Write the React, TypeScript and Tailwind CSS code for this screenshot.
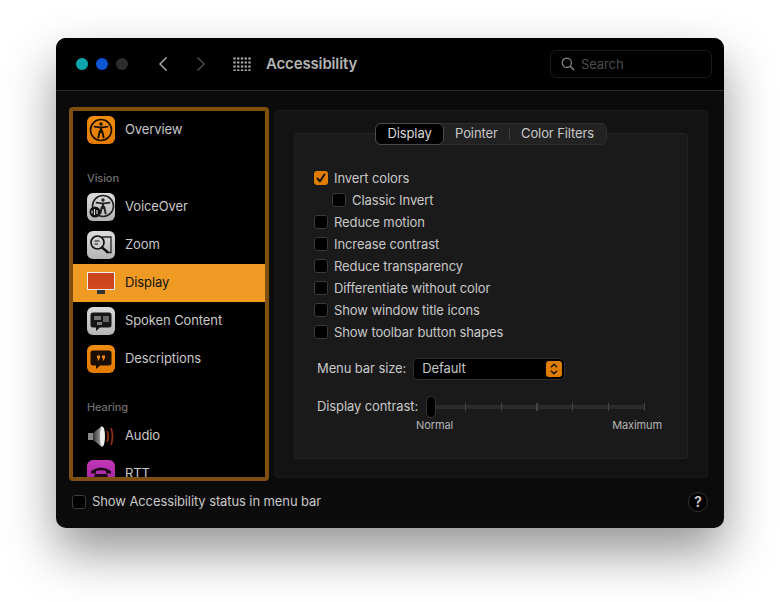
const options = [
  { label: "Invert colors", checked: true },
  { label: "Classic Invert", nested: true },
  { label: "Reduce motion" },
  { label: "Increase contrast" },
  { label: "Reduce transparency" },
  { label: "Differentiate without color" },
  { label: "Show window title icons" },
  { label: "Show toolbar button shapes" },
];

function Figure({ color, x = 14, y = 14, r = 10.5 }: { color: string; x?: number; y?: number; r?: number }) {
  return (
    <g fill="none" stroke={color}>
      <circle cx={x} cy={y} r={r} strokeWidth="1.6" />
      <circle cx={x} cy={y - 6} r="1.7" fill={color} stroke="none" />
      <path d={`M${x - 6.5} ${y - 3.4}L${x} ${y - 2.4}L${x + 6.5} ${y - 3.4}`} strokeWidth="1.7" strokeLinecap="round" />
      <path d={`M${x} ${y - 2.4}V${y + 2}M${x - 1.2} ${y + 1}L${x - 2.6} ${y + 7.4}M${x + 1.2} ${y + 1}L${x + 2.6} ${y + 7.4}`} strokeWidth="2" strokeLinecap="round" />
    </g>
  );
}

function IconTile({ children, tile }: { children: React.ReactNode; tile: "orange" | "gray" | "purple" }) {
  const bg = {
    orange: "bg-gradient-to-b from-[#f08c10] to-[#e47c02]",
    gray: "bg-gradient-to-b from-[#dcdcdc] to-[#b4b4b4]",
    purple: "bg-gradient-to-b from-[#c238b8] to-[#9c1f98]",
  }[tile];
  return (
    <div className={`w-7 h-7 rounded-[6px] overflow-hidden shrink-0 ${bg}`}>
      <svg width="28" height="28" viewBox="0 0 28 28">
        {children}
      </svg>
    </div>
  );
}

function Bubble({ children, color = "#111" }: { children?: React.ReactNode; color?: string }) {
  return (
    <>
      <path d="M6 5.500h16a2.500 2.500 0 0 1 2.500 2.500v10a2.500 2.500 0 0 1-2.500 2.500h-9l-4 3.500v-3.500H6A2.500 2.500 0 0 1 3.500 18V8A2.500 2.500 0 0 1 6 5.500z" fill={color} />
      {children}
    </>
  );
}

const rows = [
  {
    name: "VoiceOver",
    icon: (
      <IconTile tile="gray">
        <Figure color="#222" x={16} y={13} r={10.500} />
        <circle cx="8" cy="19" r="5.500" fill="#111" />
        <path d="M5 17.500v3M7.500 16v6M10 17v4" stroke="#ddd" strokeWidth="1.100" />
      </IconTile>
    ),
  },
  {
    name: "Zoom",
    icon: (
      <IconTile tile="gray">
        <path d="M15 6h9v15.500h-5" fill="none" stroke="#222" strokeWidth="1.300" />
        <circle cx="10.500" cy="11.500" r="6.500" fill="#ccc" stroke="#111" strokeWidth="1.700" />
        <path d="M7.500 10h5M7.500 13h3.500" stroke="#111" strokeWidth="1.200" />
        <path d="M15 16.500l5.500 4.500" stroke="#111" strokeWidth="2.400" strokeLinecap="round" />
      </IconTile>
    ),
  },
  {
    name: "Display",
    icon: (
      <div className="w-7 h-7 pt-[3px] shrink-0 flex flex-col items-center">
        <div className="w-7 h-[18px] border border-[#eee] bg-gradient-to-b from-[#c9431d] to-[#d2481f]" />
        <div className="w-2 h-1 bg-[#333]" />
      </div>
    ),
  },
  {
    name: "Spoken Content",
    icon: (
      <IconTile tile="gray">
        <Bubble color="#161616">
          <rect x="7" y="9" width="7" height="4" fill="#777" />
          <rect x="16" y="9" width="6" height="6" fill="#666" />
          <rect x="10" y="15" width="5" height="3" fill="#777" />
        </Bubble>
      </IconTile>
    ),
  },
  {
    name: "Descriptions",
    icon: (
      <IconTile tile="orange">
        <Bubble color="#1a0f02">
          <path d="M10 10.500h3v2.500l-1.500 2.500h-1l.7-2.200H10zM15 10.500h3v2.500l-1.500 2.500h-1l.7-2.200H15z" fill="#f08c10" />
        </Bubble>
      </IconTile>
    ),
  },
];

function Row({ name, icon, selected }: { name: string; icon: React.ReactNode; selected?: boolean }) {
  return (
    <div className={`h-[38px] pl-[14px] flex items-center gap-[10px] ${selected ? "bg-[#ef9a23] text-[#111]" : "text-[#c8c8c8]"}`}>
      {icon}
      <span className="text-[13px]">{name}</span>
    </div>
  );
}

function Heading({ children }: { children: string }) {
  return <div className="h-[39px] pl-[14px] pb-[3px] flex items-end text-[11px] font-medium leading-[14px] text-[#6e6e6e]">{children}</div>;
}

function Checkbox({ checked }: { checked?: boolean }) {
  return (
    <div className={`w-[14px] h-[14px] mb-[2px] rounded-[3px] shrink-0 flex items-center justify-center ${checked ? "bg-[#e07c00]" : "bg-black border border-[#3a3a3a]"}`}>
      {checked && (
        <svg width="12" height="12" viewBox="0 0 12 12">
          <path d="M2.500 6.500L5 9.300L9.500 2.500" fill="none" stroke="#111" strokeWidth="1.900" strokeLinecap="round" strokeLinejoin="round" />
        </svg>
      )}
    </div>
  );
}

export default function App() {
  return (
    <div className="w-[780px] h-[602px] bg-white pl-[56px] pt-[38px] overflow-hidden font-['Inter','Liberation_Sans',sans-serif] tracking-[-0.1px]">
      <div className="w-[668px] h-[490px] rounded-[10px] overflow-hidden bg-[#0b0b0b] shadow-[0_24px_50px_rgba(0,0,0,0.42)] flex flex-col">
        {/* title bar */}
        <div className="h-[53px] bg-black border-b border-[#2a2a2a] flex items-center pl-5 pr-3 shrink-0">
          <div className="flex gap-2">
            <div className="w-3 h-3 rounded-full bg-[#0aa6ad]" />
            <div className="w-3 h-3 rounded-full bg-[#0b55d6]" />
            <div className="w-3 h-3 rounded-full bg-[#2c2c2c]" />
          </div>
          <svg className="ml-[29px]" width="12" height="16" viewBox="0 0 12 16">
            <path d="M9.500 1.500L3 8l6.500 6.500" fill="none" stroke="#a8a8a8" strokeWidth="1.500" />
          </svg>
          <svg className="ml-[26px]" width="12" height="16" viewBox="0 0 12 16">
            <path d="M2.500 1.500L9 8l-6.500 6.500" fill="none" stroke="#4a4a4a" strokeWidth="1.500" />
          </svg>
          <svg className="ml-[26px]" width="18" height="14" viewBox="0 0 18 14" fill="#a0a0a0">
            {[1.500, 5.500, 9.500, 13.500].map((cy) =>
              [1.500, 5.250, 9, 12.750, 16.500].map((cx) => <circle key={`${cx}-${cy}`} cx={cx} cy={cy} r="1.300" />)
            )}
          </svg>
          <div className="ml-[15px] text-[15px] font-semibold tracking-[-0.15px] text-[#b4b4b4]">Accessibility</div>
          <div className="ml-auto w-[162px] h-7 rounded-md border border-[#1a1a1a] flex items-center pl-[10px] gap-[6px]">
            <svg width="14" height="14" viewBox="0 0 14 14">
              <circle cx="5.800" cy="5.800" r="4.600" fill="none" stroke="#8a8a8a" strokeWidth="1.200" />
              <path d="M9.200 9.200L13 13" stroke="#8a8a8a" strokeWidth="1.400" />
            </svg>
            <span className="text-[13px] mt-[1px] text-[#4c4c4c]">Search</span>
          </div>
        </div>

        {/* body */}
        <div className="flex pl-[13px] pt-4 gap-[5px]">
          <div className="w-[200px] h-[374px] rounded-[4px] border-4 border-[#7e4f0e] bg-black overflow-hidden shrink-0">
            <Row
              name="Overview"
              icon={
                <IconTile tile="orange">
                  <Figure color="#1c0f00" />
                </IconTile>
              }
            />
            <Heading>Vision</Heading>
            {rows.map((row) => (
              <Row key={row.name} name={row.name} icon={row.icon} selected={row.name === "Display"} />
            ))}
            <Heading>Hearing</Heading>
            <Row
              name="Audio"
              icon={
                <svg className="shrink-0" width="28" height="28" viewBox="0 0 28 28">
                  <defs>
                    <linearGradient id="cone" x1="0" x2="1" y1="0" y2="0">
                      <stop offset="0" stopColor="#333" />
                      <stop offset="0.7" stopColor="#888" />
                      <stop offset="1" stopColor="#ddd" />
                    </linearGradient>
                  </defs>
                  <path d="M1 11h5v7H1z" fill="#888" />
                  <path d="M6 11l9-7v21l-9-7z" fill="url(#cone)" />
                  <ellipse cx="15.500" cy="14.500" rx="2.500" ry="10" fill="#eee" />
                  <path d="M20 9q2.500 5.500 0 11M24 6q3 8.500 0 17" fill="none" stroke="#8a2c1a" strokeWidth="1.800" />
                </svg>
              }
            />
            <Row
              name="RTT"
              icon={
                <IconTile tile="purple">
                  <path d="M4 11q10-7 20 0v2.500h-5v-2.500q-4-1.500-10 0v2.500H4z" fill="#1c081a" />
                  <path d="M8 14h12l3 9H5z" fill="#1c081a" />
                </IconTile>
              }
            />
          </div>

          <div className="w-[434px] h-[368px] mt-[3px] rounded-[4px] bg-[#131313] border border-[#1a1a1a] pt-3 px-[19px] pb-[18px] flex flex-col">
            <div className="relative z-10 self-start ml-[81px] h-[22px] flex items-center rounded-md bg-[#222] border border-[#2d2d2d] text-[13px] text-[#c8c8c8]">
              <div className="w-[69px] h-[22px] -ml-px flex items-center justify-center rounded-md bg-black border border-[#4c4c4c] text-[#d8d8d8]">Display</div>
              <div className="ml-[11px] w-[44px]">Pointer</div>
              <div className="ml-[10px] w-px h-3 bg-[#3c3c3c]" />
              <div className="ml-[11px] pr-[12px]">Color Filters</div>
            </div>
            <div className="flex-1 -mt-3 rounded-[4px] bg-[#1a1a1a] border border-[#232323] pt-[34px] pl-[19px] flex flex-col">
              {options.map((o) => (
                <div key={o.label} className={`h-[22px] flex items-center gap-[6px] text-[13px] text-[#c8c8c8] ${o.nested ? "pl-[18px]" : ""}`}>
                  <Checkbox checked={o.checked} />
                  <span>{o.label}</span>
                </div>
              ))}
              <div className="mt-[14px] ml-[3px] flex items-center gap-[7px] text-[13px] text-[#c8c8c8]">
                <span>Menu bar size:</span>
                <div className="w-[152px] h-[22px] rounded-[5px] bg-black border border-[#2e2e2e] flex items-center justify-between pl-2 pr-[2px]">
                  <span>Default</span>
                  <div className="w-4 h-4 rounded-[3px] bg-[#e07c00] flex items-center justify-center">
                    <svg width="10" height="14" viewBox="0 0 10 14">
                      <path d="M2 5.200L5 2.200L8 5.200M2 8.800L5 11.800L8 8.800" fill="none" stroke="#111" strokeWidth="1.400" />
                    </svg>
                  </div>
                </div>
              </div>
              <div className="mt-[16px] ml-[3px] flex items-center text-[13px] text-[#c8c8c8]">
                <span className="w-[109px]">Display contrast:</span>
                <div className="w-[10px] h-[22px] rounded-full bg-black border border-[#333] shrink-0" />
                <div className="w-[209px] h-1 bg-[#2b2b2b] flex items-center justify-end gap-[34.600px]">
                  {[0, 1, 2, 3, 4, 5].map((t) => (
                    <div key={t} className="w-[1.200px] h-2 bg-[#444] shrink-0" />
                  ))}
                </div>
              </div>
              <div className="ml-[102px] w-[246px] flex justify-between text-[11px] leading-[14px] text-[#b4b4b4]">
                <span>Normal</span>
                <span>Maximum</span>
              </div>
            </div>
          </div>
        </div>

        {/* bottom bar */}
        <div className="flex-1 flex items-center pl-4 pr-4 pb-[6px] gap-[6px] text-[13px] text-[#c8c8c8]">
          <div className="w-[14px] h-[14px] rounded-[3px] bg-black border border-[#3a3a3a]" />
          <span>Show Accessibility status in menu bar</span>
          <div className="ml-auto w-5 h-5 rounded-full bg-black border border-[#333] flex items-center justify-center text-[14px] font-semibold text-[#d0d0d0]">?</div>
        </div>
      </div>
    </div>
  );
}
